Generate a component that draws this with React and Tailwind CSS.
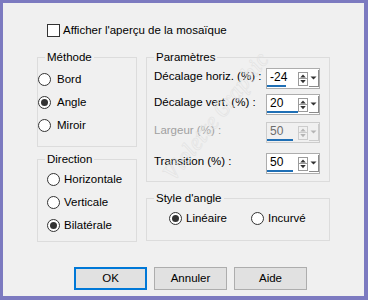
import { useState } from 'react';

const font = { fontFamily: '"Liberation Sans", Arial, sans-serif' };

function Radio({ checked, label, onClick, tight }) {
  return (
    <div
      className={`flex h-[23px] cursor-default items-center whitespace-nowrap ${tight ? 'gap-[4px]' : 'gap-[6px]'}`}
      onClick={onClick}
    >
      <span className="flex h-[13px] w-[13px] items-center justify-center rounded-full border border-[#333333] bg-white">
        {checked && <span className="h-[7px] w-[7px] rounded-full bg-[#333333]" />}
      </span>
      <span>{label}</span>
    </div>
  );
}

function Group({ title, className, children }) {
  return (
    <fieldset className={`border border-[#dcdcdc] ${className}`}>
      <legend className="ml-[7px] px-[2px] leading-[16px] whitespace-nowrap">{title}</legend>
      {children}
    </fieldset>
  );
}

function Spin({ value, bar, disabled }) {
  const arrow = disabled ? '#b5b5b5' : '#333333';
  return (
    <div
      className={`flex h-[21px] w-[54px] items-center border ${
        disabled ? 'border-[#cccccc] bg-[#f0f0f0] text-[#6d6d6d]' : 'border-[#adadad] bg-white text-black'
      }`}
    >
      <div className="flex h-full w-[31px] flex-col justify-end">
        <span className="pl-[3px] text-[12px] leading-[16px]">{value}</span>
        <div className="mb-[1px] h-[2px] bg-[#1f6fb5]" style={{ width: bar }} />
      </div>
      <div className={`flex h-[14px] w-[10px] flex-col border ${disabled ? 'border-[#cccccc]' : 'border-[#9a9a9a]'}`}>
        <svg width="8" height="6" viewBox="0 0 8 6" className="block">
          <path d="M1 5 L4 1.5 L7 5 Z" fill={arrow} />
        </svg>
        <div className={`h-px ${disabled ? 'bg-[#cccccc]' : 'bg-[#9a9a9a]'}`} />
        <svg width="8" height="6" viewBox="0 0 8 6" className="block">
          <path d="M1 1 L4 4.5 L7 1 Z" fill={arrow} />
        </svg>
      </div>
      <div
        className={`ml-[1px] flex h-[17px] w-[10px] items-center justify-center border-r border-b ${
          disabled ? 'border-[#cccccc]' : 'border-[#8a8a8a]'
        }`}
      >
        <svg width="7" height="4" viewBox="0 0 7 4">
          <path d="M0.5 0.5 L3.5 3.5 L6.5 0.5 Z" fill={arrow} />
        </svg>
      </div>
    </div>
  );
}

export default function App() {
  const [method, setMethod] = useState('Angle');
  const [direction, setDirection] = useState('Bilatérale');
  const [style, setStyle] = useState('Linéaire');
  const [preview, setPreview] = useState(false);

  return (
    <div
      className="relative h-[300px] w-[368px] overflow-hidden border-t-[3px] border-r-[4px] border-b-[4px] border-l-[3px] border-[#7c7ac0] bg-[#f0f0f0] pt-[21px] pl-[34px] text-[11.5px] text-black"
      style={font}
    >
      <div className="ml-[10px] flex h-[13px] items-center gap-[3px] whitespace-nowrap" onClick={() => setPreview(!preview)}>
        <span className="flex h-[13px] w-[13px] items-center justify-center border border-[#333333] bg-white">
          {preview && <span className="text-[10px] leading-none">✓</span>}
        </span>
        <span>Afficher l'aperçu de la mosaïque</span>
      </div>

      <div className="mt-[12px] flex gap-[9px]">
        <div className="flex w-[100px] flex-col">
          <Group title="Méthode" className="h-[98px]">
            <div className="flex flex-col pt-[3px]">
              {['Bord', 'Angle', 'Miroir'].map((m) => (
                <Radio key={m} label={m} checked={method === m} onClick={() => setMethod(m)} />
              ))}
            </div>
          </Group>
          <Group title="Direction" className="mt-[4px] h-[91px]">
            <div className="flex flex-col pt-[1px] pl-[9px]">
              {['Horizontale', 'Verticale', 'Bilatérale'].map((d) => (
                <Radio key={d} tight label={d} checked={direction === d} onClick={() => setDirection(d)} />
              ))}
            </div>
          </Group>
        </div>

        <div className="flex w-[184px] flex-col">
          <Group title="Paramètres" className="h-[133px]">
            <div className="flex flex-col pt-[3px] pr-[9px] pl-[7px] whitespace-nowrap">
              <div className="flex items-center justify-between">
                <span className="-mt-[3px]">Décalage horiz. (%) :</span>
                <Spin value="-24" bar="19px" />
              </div>
              <div className="mt-[5px] flex items-center justify-between">
                <span className="-mt-[3px]">Décalage vert. (%) :</span>
                <Spin value="20" bar="31px" />
              </div>
              <div className="mt-[7px] flex items-center justify-between">
                <span className="-mt-[3px] text-[#a0a0a0]">Largeur (%) :</span>
                <Spin value="50" bar="26px" disabled />
              </div>
              <div className="mt-[10px] flex items-center justify-between">
                <span className="-mt-[3px]">Transition (%) :</span>
                <Spin value="50" bar="26px" />
              </div>
            </div>
          </Group>
          <Group title="Style d'angle" className="mt-[8px] h-[51px]">
            <div className="flex pt-[1px] pl-[22px]">
              <div className="w-[82px]">
                <Radio tight label="Linéaire" checked={style === 'Linéaire'} onClick={() => setStyle('Linéaire')} />
              </div>
              <Radio tight label="Incurvé" checked={style === 'Incurvé'} onClick={() => setStyle('Incurvé')} />
            </div>
          </Group>
        </div>
      </div>

      <div className="mt-[25px] ml-[37px] flex gap-[7px]">
        <button className="h-[23px] w-[73px] border-2 border-[#0078d7] bg-[#e1e1e1]">OK</button>
        <button className="h-[23px] w-[73px] border border-[#adadad] bg-[#e1e1e1]">Annuler</button>
        <button className="h-[23px] w-[73px] border border-[#adadad] bg-[#e1e1e1]">Aide</button>
      </div>

      <div className="pointer-events-none absolute top-[95px] left-[135px] -rotate-[52deg] font-serif text-[24px] whitespace-nowrap text-transparent italic [-webkit-text-stroke:0.5px_#e0e0e0]">
        Violette Graphic
      </div>
    </div>
  );
}
